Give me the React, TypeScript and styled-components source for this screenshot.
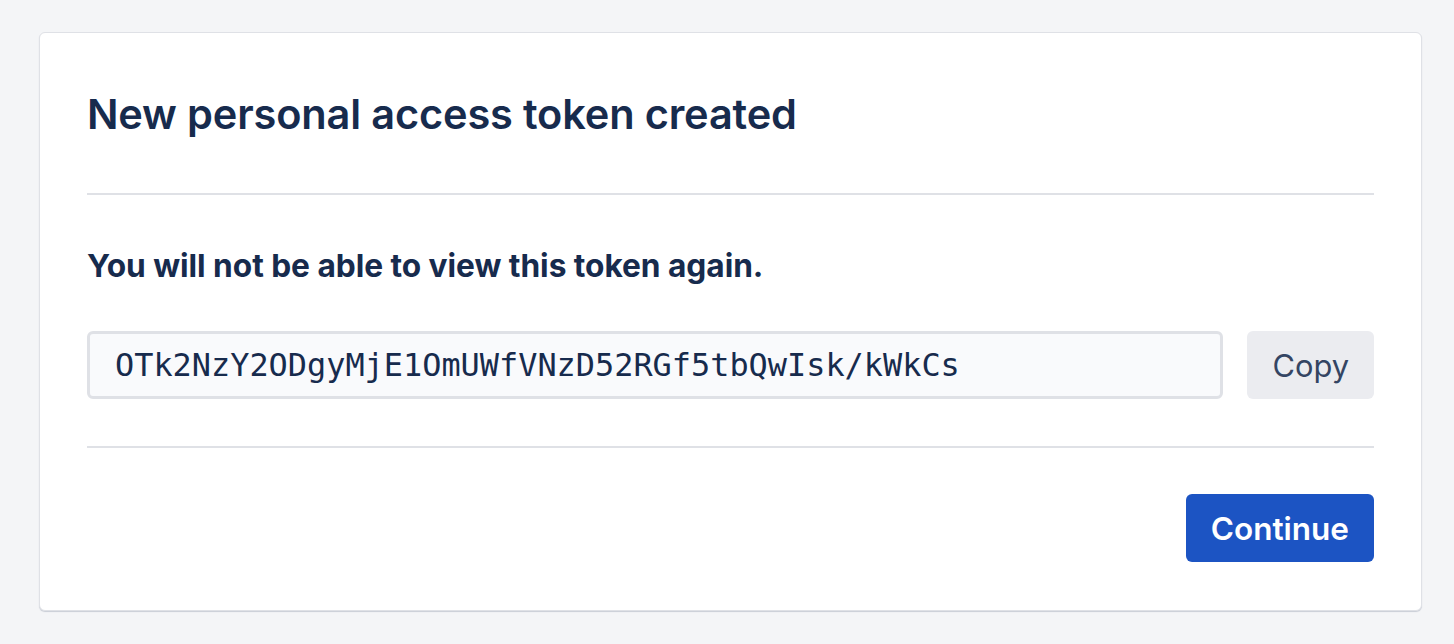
import React from "react";
import styled, { createGlobalStyle } from "styled-components";

const GlobalStyle = createGlobalStyle`
  html, body {
    margin: 0;
    padding: 0;
    background: #f4f5f7;
  }
  body {
    font-family: Inter, "Noto Sans", "Liberation Sans", sans-serif;
    color: #172b4d;
  }
`;

const Page = styled.div`
  padding: 32px 32px 32px 39px;
  box-sizing: border-box;
  min-height: 644px;
`;

const Card = styled.div`
  background: #ffffff;
  border: 1px solid #dfe1e6;
  border-radius: 6px;
  box-shadow: 0 1px 1px rgba(9, 30, 66, 0.18);
  padding: 0 47px 48px 47px;
`;

const Section = styled.div<{ $pt: number; $pb: number; $divider?: boolean }>`
  padding-top: ${(p) => p.$pt}px;
  padding-bottom: ${(p) => p.$pb}px;
  border-bottom: ${(p) => (p.$divider ? "2px solid #dfe1e6" : "none")};
`;

const Title = styled.h1`
  margin: 0;
  font-size: 41.5px;
  line-height: 48px;
  font-weight: 600;
  color: #172b4d;
  letter-spacing: -0.15px;
  white-space: nowrap;
`;

const Warning = styled.p`
  margin: 0 0 49px 0;
  font-size: 31.7px;
  line-height: 32px;
  font-weight: 700;
  color: #172b4d;
  letter-spacing: -0.05px;
  white-space: nowrap;
`;

const TokenRow = styled.div`
  display: flex;
  align-items: stretch;
  gap: 24px;
`;

const TokenField = styled.div`
  flex: 1;
  height: 68px;
  box-sizing: border-box;
  background: #f9fafc;
  border: 3px solid #dfe1e6;
  border-radius: 6px;
  display: flex;
  align-items: center;
  padding: 0 25px;
  font-family: "DejaVu Sans Mono", "Liberation Mono", monospace;
  font-size: 31.9px;
  color: #172b4d;
  white-space: nowrap;
  overflow: hidden;
`;

const Button = styled.button<{ $primary?: boolean }>`
  height: 68px;
  box-sizing: border-box;
  border: none;
  border-radius: 6px;
  font-family: Inter, "Noto Sans", "Liberation Sans", sans-serif;
  font-size: ${(p) => (p.$primary ? 31.5 : 30.8)}px;
  padding: 0 25px;
  font-weight: ${(p) => (p.$primary ? 600 : 400)};
  background: ${(p) => (p.$primary ? "#1c54c3" : "#ebecf0")};
  color: ${(p) => (p.$primary ? "#ffffff" : "#344563")};
  cursor: pointer;
  white-space: nowrap;
`;

const Footer = styled.div`
  display: flex;
  justify-content: flex-end;
  padding-top: 46px;
`;

export default function App() {
  return (
    <>
      <GlobalStyle />
      <Page>
        <Card>
          <Section $pt={57} $pb={55} $divider>
            <Title>New personal access token created</Title>
          </Section>
          <Section $pt={55} $pb={47} $divider>
            <Warning>You will not be able to view this token again.</Warning>
            <TokenRow>
              <TokenField>OTk2NzY2ODgyMjE1OmUWfVNzD52RGf5tbQwIsk/kWkCs</TokenField>
              <Button>Copy</Button>
            </TokenRow>
          </Section>
          <Footer>
            <Button $primary>Continue</Button>
          </Footer>
        </Card>
      </Page>
    </>
  );
}
